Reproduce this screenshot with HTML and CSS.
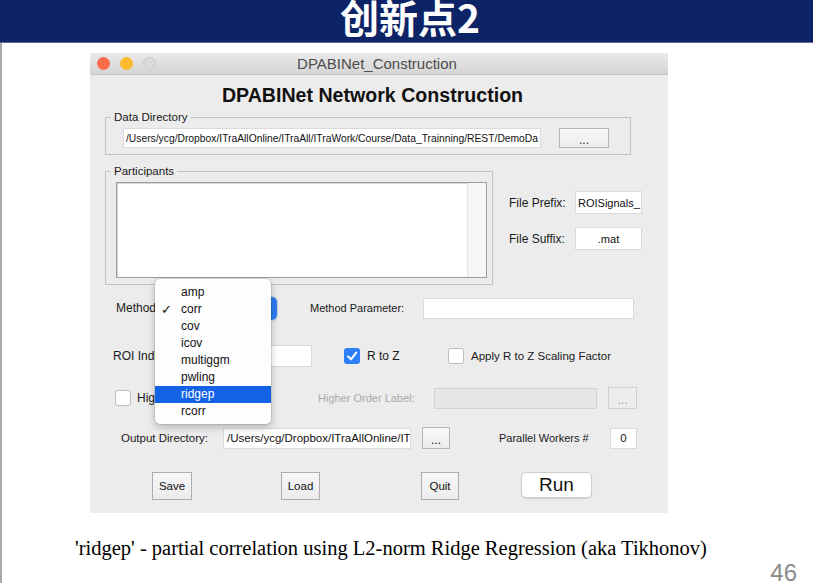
FILE: index.html
```html
<!DOCTYPE html>
<html>
<head>
<meta charset="utf-8">
<link rel="stylesheet" href="styles.css">
</head>
<body>
<header class="header"><h1 class="title">创新点2</h1></header>
<main class="slide">
  <div class="window">
    <div class="titlebar">
      <div class="lights"><span class="light red"></span><span class="light yellow"></span><span class="light gray"></span></div>
      <div class="wtitle">DPABINet_Construction</div>
      <div></div>
    </div>
    <div class="wbody">
      <h2 class="heading">DPABINet Network Construction</h2>
      <fieldset class="group data">
        <legend>Data Directory</legend>
        <div class="data-in">
          <div class="field path">/Users/ycg/Dropbox/ITraAllOnline/ITraAll/ITraWork/Course/Data_Trainning/REST/DemoDa</div>
          <div class="btn dotbtn wide">...</div>
        </div>
      </fieldset>
      <div class="mid">
        <fieldset class="group parts">
          <legend>Participants</legend>
          <div class="listbox"><div class="scroll"></div></div>
        </fieldset>
        <div class="files">
          <div class="frow"><span class="flabel">File Prefix:</span><div class="field fbox">ROISignals_</div></div>
          <div class="frow"><span class="flabel">File Suffix:</span><div class="field fbox center">.mat</div></div>
        </div>
      </div>

      <div class="row r-method">
        <span class="lbl l-method">Method:</span>
        <div class="popup"><span class="popup-arrow"></span></div>
        <span class="lbl l-mparam">Method Parameter:</span>
        <div class="field f-mparam"></div>
      </div>

      <div class="row r-roi">
        <span class="lbl l-roi">ROI Indices:</span>
        <div class="field f-roi"></div>
        <span class="cb checked cb-rz"><svg viewBox="0 0 16 16" width="16" height="16"><path d="M4 8.4 L7 11.4 L12.2 4.6" fill="none" stroke="#fff" stroke-width="2" stroke-linecap="round" stroke-linejoin="round"/></svg></span>
        <span class="lbl l-rz">R to Z</span>
        <span class="cb cb-apply"></span>
        <span class="lbl l-apply">Apply R to Z Scaling Factor</span>
      </div>

      <div class="row r-high">
        <span class="cb cb-high"></span>
        <span class="lbl l-high">Higher</span>
        <span class="lbl l-hol">Higher Order Label:</span>
        <div class="field disabled f-hol"></div>
        <div class="btn dotbtn disabled b-hol">...</div>
      </div>

      <div class="row r-out">
        <span class="lbl l-out">Output Directory:</span>
        <div class="field f-out">/Users/ycg/Dropbox/ITraAllOnline/ITr</div>
        <div class="btn dotbtn b-out">...</div>
        <span class="lbl l-pw">Parallel Workers #</span>
        <div class="field center f-pw">0</div>
      </div>

      <div class="row r-btns">
        <div class="btn push b-save">Save</div>
        <div class="btn push b-load">Load</div>
        <div class="btn push b-quit">Quit</div>
        <div class="btn run">Run</div>
      </div>

      <div class="menu">
        <div class="mi">amp</div>
        <div class="mi"><span class="check">✓</span>corr</div>
        <div class="mi">cov</div>
        <div class="mi">icov</div>
        <div class="mi">multiggm</div>
        <div class="mi">pwling</div>
        <div class="mi sel">ridgep</div>
        <div class="mi">rcorr</div>
      </div>
    </div>
  </div>
  <p class="caption">'ridgep' - partial correlation using L2-norm Ridge Regression (aka Tikhonov)</p>
  <div class="pagenum">46</div>
</main>
</body>
</html>
```
FILE: styles.css
```css
html, body {
  margin: 0;
  padding: 0;
}
body {
  width: 813px;
  height: 583px;
  overflow: hidden;
  background: #fff;
  font-family: "Liberation Sans", Arial, sans-serif;
  color: #1a1a1a;
  display: flex;
  flex-direction: column;
}

/* header */
.header {
  height: 43px;
  flex: none;
  background: #0c2366;
  display: flex;
  justify-content: center;
  overflow: hidden;
  border-bottom: 1px solid #5a6a95;
  box-sizing: border-box;
}
.title {
  margin: -3px 0 0 7px;
  font: 700 39px/39px "Noto Sans CJK SC", sans-serif;
  color: #fff;
}

/* slide */
.slide {
  flex: 1;
  border-left: 2px solid #a9a9a9;
  display: flex;
  flex-direction: column;
  min-height: 0;
}

/* window */
.window {
  margin: 10px 0 0 88px;
  width: 578px;
  height: 460px;
  flex: none;
  background: #ececec;
  display: flex;
  flex-direction: column;
}
.titlebar {
  height: 22px;
  box-sizing: border-box;
  border-bottom: 1px solid #c6c6c6;
  background: linear-gradient(#e9e9e9, #d5d5d5);
  display: grid;
  grid-template-columns: 1fr auto 1fr;
  align-items: center;
}
.lights {
  display: flex;
  gap: 10px;
  padding-left: 7px;
}
.light {
  width: 13px;
  height: 13px;
  border-radius: 50%;
}
.red { background: #fc6b4a; }
.yellow { background: #fdbb2e; }
.gray { background: #dadada; box-shadow: inset 0 0 0 1px #cacaca; }
.wtitle {
  font-size: 15px;
  color: #4d4d4d;
  margin-right: 4px;
}

.wbody {
  flex: 1;
  position: relative;
  display: flex;
  flex-direction: column;
}
.heading {
  margin: 9px 13px 0 0;
  text-align: center;
  font: 700 19.6px/22px "Liberation Sans", Arial, sans-serif;
  color: #111;
}

/* group boxes */
.group {
  margin: 0;
  border: 1px solid #c3c3c3;
  min-width: 0;
  box-sizing: border-box;
}
.group legend {
  font-size: 11.5px;
  line-height: 12px;
  padding: 0 3px;
  color: #1a1a1a;
}
.data {
  margin: 5px 0 0 15px;
  width: 526px;
  padding: 5px 0 6px 17px;
}
.data legend { margin-left: -12px; }
.data-in {
  display: flex;
  align-items: center;
  gap: 18px;
}

.field {
  background: #fff;
  box-sizing: border-box;
  border: 1px solid #dadada;
  white-space: nowrap;
  overflow: hidden;
  font-size: 11.5px;
  color: #111;
  display: flex;
  align-items: center;
  padding-left: 2px;
}
.field.center { justify-content: center; padding-left: 0; }
.field.disabled { background: #e7e7e7; border-color: #d3d3d3; }
.path {
  width: 418px;
  height: 20px;
  font-size: 10.3px;
}

.btn {
  box-sizing: border-box;
  display: flex;
  align-items: center;
  justify-content: center;
  font-size: 11.5px;
  color: #111;
}
.dotbtn {
  background: linear-gradient(#f8f8f8, #ececec);
  border: 1px solid #b5b5b5;
  font-size: 12px;
  padding-top: 3px;
  color: #333;
}
.dotbtn.wide { width: 50px; height: 20px; }
.dotbtn.disabled { color: #9a9a9a; border-color: #cfcfcf; background: #ededed; }

.mid {
  display: flex;
  margin: 10px 0 0 15px;
}
.parts {
  width: 388px;
  padding: 5px 5px 6px 10px;
}
.parts legend { margin-left: -5px; }
.listbox {
  height: 96px;
  box-sizing: border-box;
  border: 1px solid #9e9e9e;
  box-shadow: inset 1px 1px 0 #d6d6d6;
  background: #fff;
  display: flex;
  justify-content: flex-end;
}
.scroll {
  width: 18px;
  background: #f6f6f6;
  border-left: 1px solid #e4e4e4;
}
.files {
  margin: 26px 0 0 16px;
  display: flex;
  flex-direction: column;
  gap: 13px;
}
.frow {
  display: flex;
  align-items: center;
}
.flabel {
  width: 66px;
  font-size: 12px;
}
.fbox {
  width: 67px;
  height: 23px;
  font-size: 11px;
}

/* rows */
.row {
  display: flex;
  align-items: center;
  height: 22px;
  flex: none;
}
.lbl {
  font-size: 11.5px;
  white-space: nowrap;
  flex: none;
}
.r-method { margin-top: 12px; }
.l-method { margin-left: 26px; width: 84px; font-size: 12px; }
.popup {
  width: 77px;
  height: 23px;
  border-radius: 5px;
  background: #fff;
  box-shadow: 0 0 0 1px #cfcfcf;
  display: flex;
  justify-content: flex-end;
  overflow: hidden;
}
.popup-arrow {
  width: 18px;
  background: #2d7df5;
}
.l-mparam { margin-left: 33px; width: 113px; font-size: 11px; }
.f-mparam { width: 211px; height: 21px; }

.r-roi { margin-top: 26px; }
.l-roi { margin-left: 23px; width: 102px; font-size: 12px; }
.f-roi { width: 97px; height: 22px; }
.cb {
  width: 16px;
  height: 16px;
  box-sizing: border-box;
  border-radius: 3px;
  background: #fff;
  border: 1px solid #bdbdbd;
  flex: none;
  display: block;
}
.cb svg { display: block; }
.cb.checked { background: #2b80f7; border: none; }
.cb-rz { margin-left: 32px; }
.l-rz { margin-left: 7px; width: 81px; font-size: 12px; }
.l-apply { margin-left: 7px; }

.r-high { margin-top: 20px; }
.cb-high { margin-left: 25px; }
.l-high { margin-left: 6px; width: 181px; font-size: 12px; }
.l-hol { width: 116px; font-size: 11px; color: #a9a9a9; }
.f-hol { width: 163px; height: 21px; }
.b-hol { margin-left: 11px; width: 29px; height: 22px; }

.r-out { margin-top: 18px; }
.l-out { margin-left: 31px; width: 102px; }
.f-out { width: 188px; height: 21px; padding-left: 3px; }
.b-out { margin-left: 11px; width: 28px; height: 22px; color: #111; }
.l-pw { margin-left: 49px; width: 111px; font-size: 11px; }
.f-pw { width: 27px; height: 21px; }

.r-btns { margin-top: 23px; height: 28px; }
.push {
  height: 28px;
  background: linear-gradient(#f7f7f7, #ececec);
  border: 1px solid #adadad;
}
.b-save { margin-left: 62px; width: 40px; }
.b-load { margin-left: 89px; width: 39px; }
.b-quit { margin-left: 101px; width: 38px; }
.run {
  margin-left: 62px;
  width: 71px;
  height: 26px;
  background: #fff;
  border: 1px solid #cdcdcd;
  border-radius: 5px;
  box-shadow: 0 1px 1px rgba(0,0,0,0.12);
  font-size: 19px;
  align-self: flex-start;
}

/* dropdown menu */
.menu {
  position: absolute;
  top: 204px;
  left: 65px;
  width: 116px;
  padding: 5px 0 4px;
  background: #fdfdfd;
  border-radius: 5px;
  box-shadow: 0 3px 9px rgba(0,0,0,0.25), 0 0 0 1px rgba(0,0,0,0.08);
}
.mi {
  height: 17px;
  line-height: 17px;
  padding-left: 26px;
  font-size: 12px;
  color: #111;
  position: relative;
}
.mi.sel { background: #1463e6; color: #fff; }
.check {
  position: absolute;
  left: 6px;
  top: 0;
  font-family: "DejaVu Sans", sans-serif;
  font-size: 13px;
}

/* caption */
.caption {
  margin: 23px 0 0 73px;
  font: 20.5px/24px "Liberation Serif", "Times New Roman", serif;
  color: #000;
}
.pagenum {
  align-self: flex-end;
  margin: 4px 16px 0 0;
  font: 24px/18px "Liberation Sans", Arial, sans-serif;
  color: #8a8a8a;
}
```
